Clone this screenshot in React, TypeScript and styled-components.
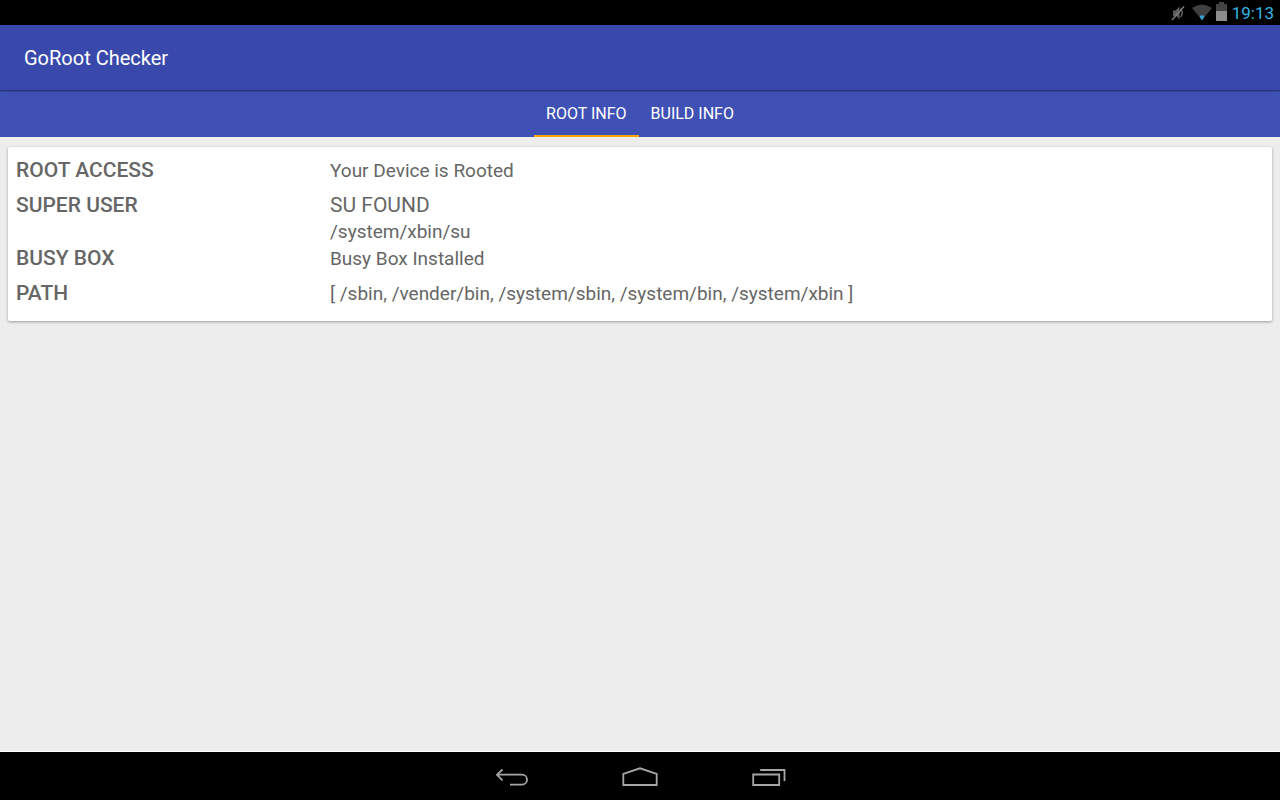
import React from "react";
import styled, { createGlobalStyle } from "styled-components";

const GlobalStyle = createGlobalStyle`
  * { box-sizing: border-box; }
  body {
    margin: 0;
    background: #ededed;
    font-family: Roboto, "Liberation Sans", sans-serif;
  }
`;

const Screen = styled.div`
  min-height: 100vh;
  display: flex;
  flex-direction: column;
`;

const StatusBar = styled.div`
  height: 25px;
  padding: 0 6px;
  display: flex;
  align-items: center;
  justify-content: flex-end;
  background: #000;
`;

const StatusIcons = styled.svg`
  width: 60px;
  height: 25px;
  margin-right: 2px;
`;

const Clock = styled.time`
  padding-top: 1px;
  color: #33b5e5;
  font-size: 17px;
  line-height: 24px;
`;

const AppBar = styled.header`
  height: 65px;
  padding: 0 24px;
  display: flex;
  align-items: center;
  position: relative;
  background: #3949ab;
  box-shadow: 0 1px 2px rgba(0, 0, 0, 0.5);
`;

const Title = styled.h1`
  margin: 0;
  color: #fff;
  font-size: 20px;
  font-weight: 400;
  line-height: 24px;
`;

const Tabs = styled.div`
  height: 47px;
  display: flex;
  justify-content: center;
  background: #3f51b5;
`;

const Tab = styled.button<{ $active?: boolean }>`
  padding: 2px 12px 0;
  border: 0;
  border-bottom: 2px solid ${(p) => (p.$active ? "#ffa500" : "transparent")};
  background: none;
  color: #fff;
  font-family: inherit;
  font-size: 16px;
`;

const Content = styled.main`
  flex: 1;
  padding: 10px 8px;
  border-bottom: 1px solid #fff;
`;

const Card = styled.section`
  padding: 10px 8px 14px;
  border-radius: 2px;
  background: #fff;
  box-shadow: 0 1px 3px rgba(0, 0, 0, 0.35);
`;

const InfoTable = styled.table`
  width: 100%;
  table-layout: fixed;
  border-collapse: collapse;
  color: #666;
  font-size: 19px;
  line-height: 27px;
`;

const Label = styled.th`
  width: 25%;
  padding: 0;
  text-align: left;
  vertical-align: top;
  font-size: 21px;
  font-weight: 500;
  line-height: 26px;
`;

const Value = styled.td<{ $spaced?: boolean }>`
  padding: 0 0 ${(p) => (p.$spaced ? "8px" : "0")} 2px;
  vertical-align: top;
`;

const Status = styled.div`
  font-size: 21px;
  line-height: 26px;
`;

const NavBar = styled.nav`
  height: 48px;
  display: flex;
  justify-content: center;
  gap: 48px;
  background: #000;
`;

const NavButton = styled.button`
  width: 80px;
  padding: 0;
  border: 0;
  background: none;

  svg {
    display: block;
    fill: none;
    stroke: #a6a6a6;
    stroke-width: 1.8;
  }
`;

export default function App() {
  return (
    <Screen>
      <GlobalStyle />
      <StatusBar>
        <StatusIcons viewBox="0 0 60 25" aria-hidden="true">
          <path d="M3 10.500h2.500L9.500 6.500v13L6.500 16H3z" fill="#5c5c5c" />
          <path d="M10.500 8.500q3.500 4.500 0 8.500" fill="none" stroke="#5c5c5c" strokeWidth="1.6" />
          <path d="M2 20L14 6.500" stroke="#808080" strokeWidth="1.3" />
          <path d="M22 8Q32 1 42 8L32 20z" fill="#404040" />
          <path d="M29.800 16.500Q32 14.500 34.200 16.500L32 20z" fill="#33a5d0" stroke="#33a5d0" strokeWidth="0.6" />
          <path d="M49 2h5v2h3v7H46V4h3z" fill="#444" />
          <path d="M46 11h11v10H46z" fill="#8c8c8c" />
        </StatusIcons>
        <Clock>19:13</Clock>
      </StatusBar>
      <AppBar>
        <Title>GoRoot Checker</Title>
      </AppBar>
      <Tabs role="tablist">
        <Tab role="tab" aria-selected="true" $active>ROOT INFO</Tab>
        <Tab role="tab" aria-selected="false">BUILD INFO</Tab>
      </Tabs>
      <Content>
        <Card>
          <InfoTable>
            <tbody>
              <tr>
                <Label scope="row">ROOT ACCESS</Label>
                <Value $spaced>Your Device is Rooted</Value>
              </tr>
              <tr>
                <Label scope="row">SUPER USER</Label>
                <Value>
                  <Status>SU FOUND</Status>
                  /system/xbin/su
                </Value>
              </tr>
              <tr>
                <Label scope="row">BUSY BOX</Label>
                <Value $spaced>Busy Box Installed</Value>
              </tr>
              <tr>
                <Label scope="row">PATH</Label>
                <Value>[ /sbin, /vender/bin, /system/sbin, /system/bin, /system/xbin ]</Value>
              </tr>
            </tbody>
          </InfoTable>
        </Card>
      </Content>
      <NavBar aria-label="System">
        <NavButton aria-label="Back">
          <svg width="80" height="48" viewBox="0 0 80 48">
            <path d="M30.500 17.500L25 22.700L30.500 28.500M25 22.700H50A5 5 0 0 1 50 32.700H38" />
          </svg>
        </NavButton>
        <NavButton aria-label="Home">
          <svg width="80" height="48" viewBox="0 0 80 48">
            <path d="M23.300 33V21.800L40 16.300L56.700 21.800V33z" />
          </svg>
        </NavButton>
        <NavButton aria-label="Recent apps">
          <svg width="80" height="48" viewBox="0 0 80 48">
            <path d="M25.200 22.500H51.200V33H25.200zM32.200 18H56.500V29" />
          </svg>
        </NavButton>
      </NavBar>
    </Screen>
  );
}
